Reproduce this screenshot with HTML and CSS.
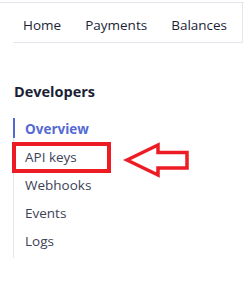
FILE: index.html
```html
<!DOCTYPE html>
<html>
<head>
<meta charset="utf-8">
<link rel="stylesheet" href="styles.css">
</head>
<body>
<div class="topline"></div>
<nav class="tabs">
  <span class="tab">Home</span>
  <span class="tab">Payments</span>
  <span class="tab">Balances</span>
</nav>
<section class="side">
  <h2 class="title">Developers</h2>
  <ul class="menu">
    <li class="item active">Overview</li>
    <li class="item marked">API keys</li>
    <li class="item">Webhooks</li>
    <li class="item">Events</li>
    <li class="item">Logs</li>
  </ul>
</section>
<svg class="annot" width="244" height="296" viewBox="0 0 244 296">
  <rect x="14" y="144" width="95" height="27" fill="none" stroke="#ed1c24" stroke-width="4"/>
  <path d="M127 160 L158 145 L158 152.5 L187 152.5 L187 168 L158 168 L158 175 Z" fill="none" stroke="#ed1c24" stroke-width="3.5" stroke-linejoin="miter"/>
</svg>
</body>
</html>
```
FILE: styles.css
```css
html, body {
  margin: 0;
  padding: 0;
  background: #fff;
}
body {
  position: relative;
  width: 244px;
  height: 296px;
  overflow: hidden;
  font-family: "Open Sans", "Noto Sans", sans-serif;
}
.topline {
  margin-top: 2px;
  border-top: 1px solid #e3e8ee;
}
.tabs {
  margin-left: 13px;
  height: 40px;
  border-bottom: 1px solid #e3e8ee;
  border-right: 1px solid #e3e8ee;
  margin-right: 1px;
  display: flex;
  align-items: center;
  gap: 24px;
  padding: 5px 0 0 10px;
  box-sizing: border-box;
  font-size: 13.5px;
  color: #1a1f36;
}
.side {
  margin-left: 13px;
}
.title {
  margin: 39px 0 0 1px;
  font-size: 14.5px;
  font-weight: 700;
  color: #1a1f36;
  line-height: 20px;
}
.menu {
  list-style: none;
  margin: 16px 0 0 0;
  padding: 0 0 3px 0;
  border-left: 1px solid #e3e8ee;
  width: 100px;
}
.item {
  height: 28px;
  line-height: 28px;
  padding-left: 11px;
  font-size: 13.5px;
  color: #3c4257;
}
.item.active {
  color: #5469d4;
  font-weight: 700;
  position: relative;
  height: 20px;
  line-height: 22px;
  margin-bottom: 5px;
}
.item.active::before {
  content: "";
  position: absolute;
  left: -1px;
  top: 0;
  width: 2px;
  height: 20px;
  background: #5469d4;
}
.annot {
  position: absolute;
  left: 0;
  top: 0;
}
```
